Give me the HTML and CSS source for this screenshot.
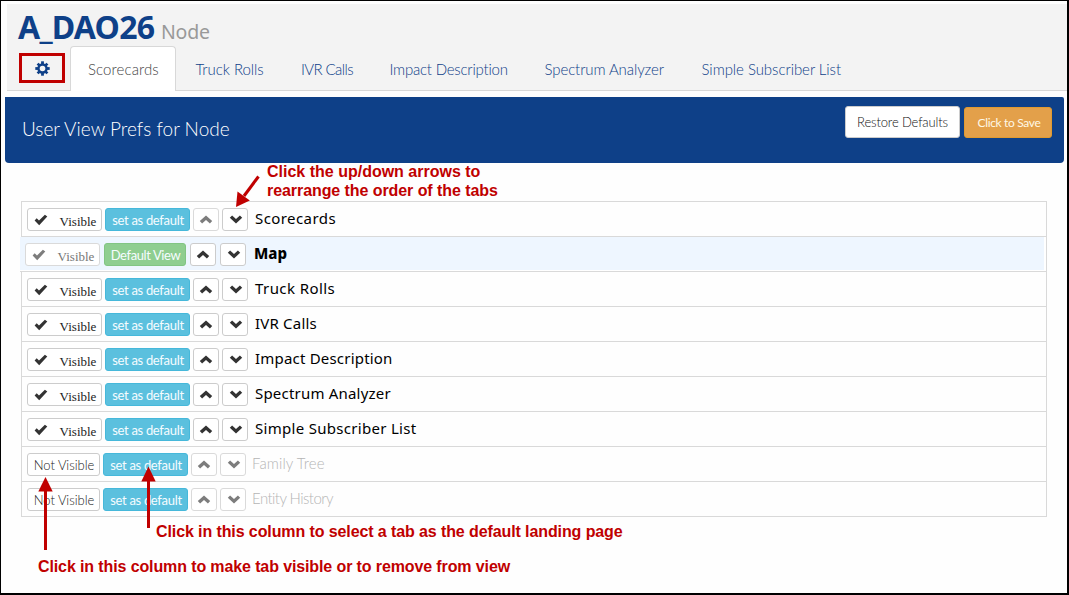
FILE: index.html
```
<!DOCTYPE html>
<html lang="en">
<head>
<meta charset="utf-8">
<title>User View Prefs for Node</title>
<link rel="stylesheet" href="styles.css">
</head>
<body>
<svg class="defs" width="0" height="0" aria-hidden="true">
  <symbol id="check" viewBox="0 0 14 12"><path d="M0.6 6.6 2.7 4.3 5 6.6 10.9 0.7 13.3 2.6 5.2 11.2Z"/></symbol>
  <symbol id="up" viewBox="0 0 14 9"><path d="M7 0.4 13.2 6 10.9 8.4 7 4.9 3.1 8.4 0.8 6Z"/></symbol>
  <symbol id="down" viewBox="0 0 14 9"><path d="M7 8.4 0.8 2.8 3.1 0.5 7 4 10.9 0.5 13.2 2.8Z"/></symbol>
</svg>
<div class="page">
  <header class="header">
    <h1 class="title"><span class="title-name">A_DAO26</span><small class="title-type">Node</small></h1>
    <nav class="tabs">
      <a class="gear"><svg width="15" height="15" viewBox="-7.5 -7.5 15 15"><g fill="#0e4088"><rect x="-1.4" y="-7.2" width="2.8" height="14.4"/><rect x="-7.2" y="-1.4" width="14.4" height="2.8"/><rect x="-1.4" y="-6.9" width="2.8" height="13.8" transform="rotate(45)"/><rect x="-1.4" y="-6.9" width="2.8" height="13.8" transform="rotate(-45)"/><circle r="5.2"/></g><circle r="2.8" fill="#f3f3f3"/></svg></a>
      <a class="tab active"><span class="t1">Scorecards</span></a>
      <a class="tab"><span class="t2">Truck Rolls</span></a>
      <a class="tab"><span class="t3">IVR Calls</span></a>
      <a class="tab"><span class="t4">Impact Description</span></a>
      <a class="tab"><span class="t5">Spectrum Analyzer</span></a>
      <a class="tab"><span class="t6">Simple Subscriber List</span></a>
    </nav>
  </header>
  <section class="banner">
    <h2 class="banner-title">User View Prefs for Node</h2>
    <button class="restore">Restore Defaults</button>
    <button class="save">Click to Save</button>
  </section>
  <div class="list">
    <div class="row"><button class="btn vis"><svg><use href="#check"/></svg>Visible</button><button class="btn set">set as default</button><button class="btn arrow dim"><svg><use href="#up"/></svg></button><button class="btn arrow down"><svg><use href="#down"/></svg></button><span class="label wide">Scorecards</span></div>
    <div class="row current"><button class="btn vis dim"><svg><use href="#check"/></svg>Visible</button><button class="btn default">Default View</button><button class="btn arrow"><svg><use href="#up"/></svg></button><button class="btn arrow down"><svg><use href="#down"/></svg></button><span class="label">Map</span></div>
    <div class="row"><button class="btn vis"><svg><use href="#check"/></svg>Visible</button><button class="btn set">set as default</button><button class="btn arrow"><svg><use href="#up"/></svg></button><button class="btn arrow down"><svg><use href="#down"/></svg></button><span class="label wide">Truck Rolls</span></div>
    <div class="row"><button class="btn vis"><svg><use href="#check"/></svg>Visible</button><button class="btn set">set as default</button><button class="btn arrow"><svg><use href="#up"/></svg></button><button class="btn arrow down"><svg><use href="#down"/></svg></button><span class="label">IVR Calls</span></div>
    <div class="row"><button class="btn vis"><svg><use href="#check"/></svg>Visible</button><button class="btn set">set as default</button><button class="btn arrow"><svg><use href="#up"/></svg></button><button class="btn arrow down"><svg><use href="#down"/></svg></button><span class="label">Impact Description</span></div>
    <div class="row"><button class="btn vis"><svg><use href="#check"/></svg>Visible</button><button class="btn set">set as default</button><button class="btn arrow"><svg><use href="#up"/></svg></button><button class="btn arrow down"><svg><use href="#down"/></svg></button><span class="label">Spectrum Analyzer</span></div>
    <div class="row"><button class="btn vis"><svg><use href="#check"/></svg>Visible</button><button class="btn set">set as default</button><button class="btn arrow"><svg><use href="#up"/></svg></button><button class="btn arrow down"><svg><use href="#down"/></svg></button><span class="label long">Simple Subscriber List</span></div>
    <div class="row hidden-tab"><button class="btn notvis">Not Visible</button><button class="btn set">set as default</button><button class="btn arrow dim"><svg><use href="#up"/></svg></button><button class="btn arrow down dim"><svg><use href="#down"/></svg></button><span class="label">Family Tree</span></div>
    <div class="row hidden-tab"><button class="btn notvis">Not Visible</button><button class="btn set">set as default</button><button class="btn arrow dim"><svg><use href="#up"/></svg></button><button class="btn arrow down dim"><svg><use href="#down"/></svg></button><span class="label">Entity History</span></div>
  </div>
  <svg class="pointers" width="1069" height="595" viewBox="0 0 1069 595">
    <g stroke="#c00000" stroke-width="3" fill="none"><path d="M258.5 176.500 244 196"/><path d="M148.500 528V480"/><path d="M45.500 550V490"/></g>
    <g fill="#c00000"><path d="M236 207 237.500 191.500 249.800 200.500Z"/><path d="M148.500 466.500 155.700 481.500H141.300Z"/><path d="M45.500 477 52.700 491.500H38.300Z"/></g>
  </svg>
  <p class="note note-arrows">Click the up/down arrows to<br><span>rearrange the order of the tabs</span></p>
  <p class="note note-default">Click in this column to select a tab as the default landing page</p>
  <p class="note note-visible">Click in this column to make tab visible or to remove from view</p>
</div>
</body>
</html>
```
FILE: styles.css
```
* { box-sizing: border-box; }
body { margin: 0; background: #fff; font-family: Lato, sans-serif; }
.defs { position: absolute; }
.page {
  position: relative;
  width: 1069px;
  height: 595px;
  border: solid #000;
  border-width: 1px 2px 2px 1px;
  background: #fefefe;
  padding: 3px 0 0 4px;
  overflow: hidden;
  white-space: nowrap;
}
.header {
  height: 87px;
  margin-left: 2px;
  padding: 4px 0 0 11px;
  background: #f3f3f3;
  border-bottom: 1px solid #d8d8d8;
}
.title {
  display: flex;
  align-items: baseline;
  height: 38px;
  margin: 0;
  line-height: 37px;
  font-family: "Noto Sans", sans-serif;
  color: #0e4088;
}
.title-name { width: 143px; font-size: 32px; font-weight: 700; letter-spacing: -.75px; }
.title-type { font-size: 19.5px; font-weight: 400; letter-spacing: -.2px; color: #999; }
.tabs { display: flex; height: 45px; }
.gear {
  display: flex;
  align-items: center;
  justify-content: center;
  width: 46px;
  height: 30px;
  margin: 7px 5px 0 1px;
  border: 3px solid #c00000;
}
.tab {
  height: 45px;
  padding: 0 18px;
  margin-right: 1.5px;
  font-size: 15px;
  font-weight: 300;
  line-height: 47px;
  color: #0e4088;
}
.tab.active {
  padding: 0 16px 0 17px;
  line-height: 45px;
  color: #444;
  background: #fff;
  border: 1px solid #d8d8d8;
  border-bottom: 0;
  border-radius: 4px 4px 0 0;
}
.tab span { display: inline-block; }
.t1 { width: 71px; letter-spacing: .1px; }
.t2 { width: 68px; letter-spacing: -.05px; }
.t3 { width: 51px; letter-spacing: -.6px; }
.t4 { width: 117.5px; letter-spacing: -.22px; }
.t5 { width: 119.5px; letter-spacing: -.1px; }
.t6 { width: 141px; letter-spacing: -.06px; }
.banner {
  display: flex;
  width: 1059px;
  height: 66px;
  margin-top: 6px;
  padding: 9px 12px 0 17px;
  background: #0e4088;
  border-radius: 0 2px 4px 4px;
}
.banner-title {
  flex: 1;
  margin: 0;
  font-size: 19px;
  font-weight: 300;
  line-height: 46px;
  letter-spacing: 0;
  color: #fff;
}
.banner button { padding: 0; font-family: inherit; border-radius: 3px; }
.restore {
  width: 115px;
  height: 32px;
  margin-right: 4px;
  font-size: 13px;
  font-weight: 300;
  letter-spacing: -.15px;
  color: #111;
  background: #fff;
  border: 1px solid #ccc;
}
.banner .save {
  width: 88px;
  height: 31px;
  margin-top: 1px;
  padding-left: 2px;
  font-size: 12px;
  font-weight: 400;
  letter-spacing: -.35px;
  color: #fff8e6;
  background: #e3a04a;
  border: 1px solid #e09a30;
}
.list {
  width: 1026px;
  margin: 38px 0 0 16px;
  border: 1px solid #d9d9d9;
}
.row { display: flex; height: 35px; padding: 6px 0 0 5px; border-bottom: 1px solid #d9d9d9; }
.row:last-child { height: 34px; border-bottom: 0; }
.btn {
  display: flex;
  align-items: center;
  justify-content: center;
  height: 23px;
  margin: 0 3px 0 0;
  padding: 0;
  font: 300 13px Lato, sans-serif;
  color: #222;
  background: #fff;
  border: 1px solid #ccc;
  border-radius: 3px;
}
.btn svg { width: 14px; height: 9px; fill: #333; }
.down svg { margin-left: 1px; }
.vis { width: 75px; padding: 4px 0 0 1px; font: 400 13px "Liberation Serif", serif; }
.vis svg { height: 12px; margin: -3px 12px 0 0; }
.notvis { width: 73px; padding-left: 1px; letter-spacing: -.05px; }
.set, .default { padding-left: 1px; font-weight: 400; letter-spacing: -.3px; color: #f6fcff; }
.set { width: 85px; background: #5bc0de; border-color: #46b8da; }
.default { width: 82px; margin-right: 4px; background: #8fce90; border-color: #82c583; }
.default { letter-spacing: -.4px; }
.arrow { width: 26px; }
.dim { color: #777; border-color: #dadada; }
.dim svg { fill: #7d7d7d; }
.label { margin-left: 4px; font: 15px/20px "Noto Sans", sans-serif; letter-spacing: .2px; color: #000; }
.wide { letter-spacing: .42px; }
.long { letter-spacing: .3px; }
.current {
  position: relative;
  margin-left: -2px;
  padding-left: 5px;
  background: linear-gradient(#eef6ff, #eef6ff) 0 0 / 1024px 33px no-repeat #fff;
}
.current .vis, .current .arrow { margin-right: 4px; }
.current .label { margin-left: 4px; font-weight: 800; letter-spacing: 0; }
.current .vis.dim { color: #777; }
.hidden-tab .label { margin-left: 3px; font: 300 15px/21px Lato, sans-serif; letter-spacing: .1px; color: #b5b5b5; }
.hidden-tab:last-child .label { letter-spacing: -.55px; }
.pointers { position: absolute; left: -1px; top: -1px; }
.note { position: absolute; margin: 0; font: 700 16px/19px "Liberation Sans", sans-serif; color: #c00000; }
.note-arrows { left: 266px; top: 161px; }
.note-arrows span { letter-spacing: -.07px; }
.note-default { left: 155px; top: 521px; letter-spacing: -.1px; }
.note-visible { left: 37px; top: 556px; letter-spacing: -.115px; }
```
